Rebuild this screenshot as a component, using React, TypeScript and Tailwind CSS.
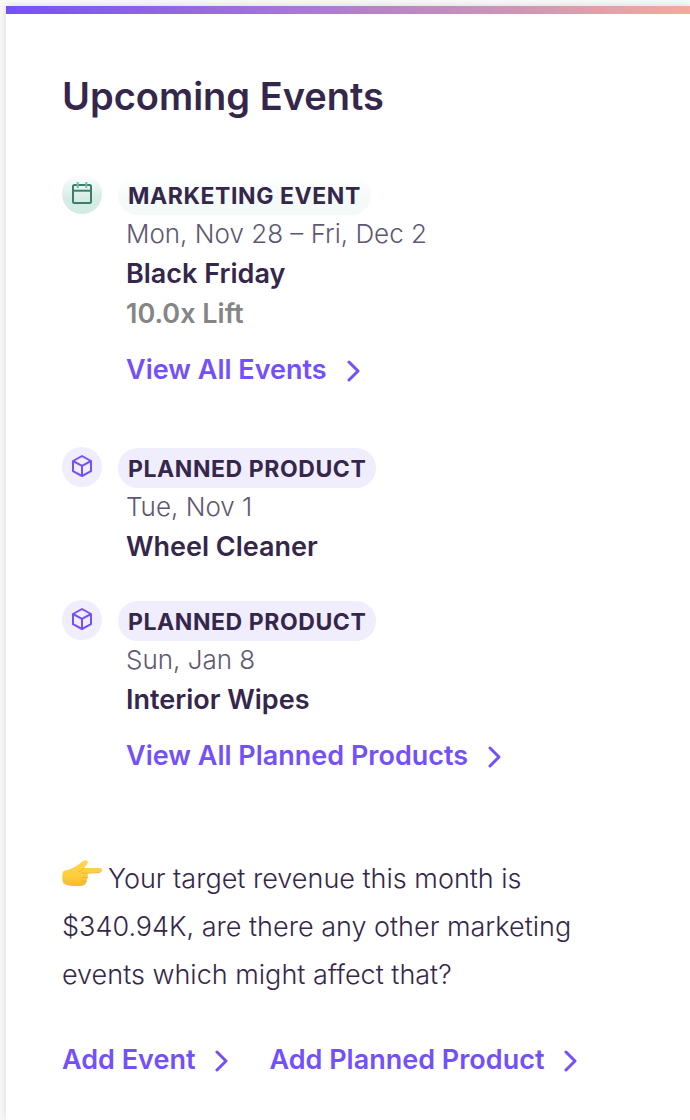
import type { ReactNode } from "react";

function CalendarIcon() {
  return (
    <svg viewBox="0 0 24 24" className="size-6" fill="none" stroke="#377f6b" strokeWidth="2" strokeLinejoin="round" aria-hidden="true">
      <rect x="3" y="3" width="18" height="18" rx="1.5" />
      <path d="M3 8.700h18" />
      <path d="M7.700 0v6M16.300 0v6" stroke="#7fb3a4" />
    </svg>
  );
}

function BoxIcon() {
  return (
    <svg viewBox="0 0 24 24" className="size-6" fill="none" stroke="#7450fa" strokeWidth="2" strokeLinejoin="round" aria-hidden="true">
      <path d="M12 1l9 5v10.200L12 21l-9-4.800V6z" />
      <path d="M3 6l9 4.800L21 6M12 10.800V21" />
    </svg>
  );
}

function PointingHand() {
  return (
    <svg viewBox="0 0 40 28" className="mr-1.5 inline-block h-7 w-10 align-baseline" role="img" aria-label="Pointing right">
      <defs>
        <linearGradient id="skin" x1="0" y1="0" x2="0" y2="1">
          <stop offset="0" stopColor="#ffd84d" />
          <stop offset="0.600" stopColor="#fdcd3c" />
          <stop offset="1" stopColor="#f7b931" />
        </linearGradient>
      </defs>
      <path
        d="M1.500 11C5 10 9 9.300 12 7.300c3-1.500 6-3.800 9-6.300 2-1.600 5-.8 4.900 1.300-.1 1.800-2.400 3.400-3.900 5.700h15.800c3 0 3 4.600 0 4.600L25.500 13c.6 2 .4 4-.2 5.600-.2 1.400-.4 2.300-1 3.200-.4 2.600-1.800 3.600-4 3.900-5 .5-11 .7-15.500-.6L1.500 23.500C-.2 20-.2 14.500 1.500 11z"
        fill="url(#skin)"
      />
      <path d="M22 8c-1.500 1.700-3 3-5 3.700M37.500 12.600l-12 .6c-2 .3-4 .1-5.500-.5M25.500 17.600c-1.500.3-3 .2-4.300-.2M24.300 21.500c-1.300.2-2.500.1-3.600-.2" fill="none" stroke="#eeb030" strokeWidth="0.900" strokeLinecap="round" />
    </svg>
  );
}

function ActionLink({ children }: { children: ReactNode }) {
  return (
    <a href="#" className="flex h-10 w-fit items-center gap-5 text-[27px] font-semibold whitespace-nowrap text-[#7450fa]">
      {children}
      <svg viewBox="0 0 14 22" className="mt-0.5 h-[22px] w-3.5" fill="none" stroke="currentColor" strokeWidth="3" strokeLinecap="round" strokeLinejoin="round" aria-hidden="true">
        <path d="M2 2l9 9-9 9" />
      </svg>
    </a>
  );
}

type EventItemProps = {
  kind: "marketing" | "product";
  label: string;
  date: string;
  title: string;
  children?: ReactNode;
};

function EventItem({ kind, label, date, title, children }: EventItemProps) {
  const marketing = kind === "marketing";
  return (
    <li className="flex items-start gap-4">
      <span className={`flex size-10 shrink-0 items-center justify-center rounded-full ${marketing ? "bg-linear-to-b from-white to-[#d5ece5] to-60%" : "bg-[#f0edfd]"}`}>
        {marketing ? <CalendarIcon /> : <BoxIcon />}
      </span>
      <div className="min-w-0">
        <div className={`mt-px -mb-px flex h-10 w-fit items-center rounded-full px-2.5 pt-0.5 text-[23px] font-bold tracking-wide ${marketing ? "bg-linear-to-b from-white to-[#f3faf8] to-60%" : "bg-[#f0edfd]"}`}>
          {label}
        </div>
        <div className="pl-2 text-[27px] leading-10">
          <p className="text-[26px] font-light text-[#5f5772]">{date}</p>
          <p className="font-semibold">{title}</p>
          {children}
        </div>
      </div>
    </li>
  );
}

export default function App() {
  return (
    <div className="min-h-screen bg-[#fafafa] pt-1.5 pl-1.5 font-['Inter',sans-serif] text-[#35274b]">
      <main className="min-h-[calc(100vh-6px)] bg-white shadow-[0_0_8px_rgba(0,0,0,0.14)]">
        <div className="h-2 bg-linear-to-r/srgb from-[#7450fa] to-[#efad9d]" />
        <div className="px-14 pt-[58px] pb-10">
          <h1 className="text-[38px] leading-12 font-semibold">Upcoming Events</h1>
          <ul className="mt-[54px]">
            <EventItem kind="marketing" label="MARKETING EVENT" date="Mon, Nov 28 – Fri, Dec 2" title="Black Friday">
              <p className="font-semibold text-[#858585]">10.0x Lift</p>
              <div className="mt-4"><ActionLink>View All Events</ActionLink></div>
            </EventItem>
          </ul>
          <ul className="mt-[57px] flex flex-col gap-[33px]">
            <EventItem kind="product" label="PLANNED PRODUCT" date="Tue, Nov 1" title="Wheel Cleaner" />
            <EventItem kind="product" label="PLANNED PRODUCT" date="Sun, Jan 8" title="Interior Wipes">
              <div className="mt-4"><ActionLink>View All Planned Products</ActionLink></div>
            </EventItem>
          </ul>
          <p className="mt-[79px] max-w-[530px] text-[27px] leading-12 font-light">
            <PointingHand />
            Your target revenue this month is $340.94K, are there any other marketing events which might affect that?
          </p>
          <div className="mt-[41px] flex flex-wrap gap-x-10">
            <ActionLink>Add Event</ActionLink>
            <ActionLink>Add Planned Product</ActionLink>
          </div>
        </div>
      </main>
    </div>
  );
}
